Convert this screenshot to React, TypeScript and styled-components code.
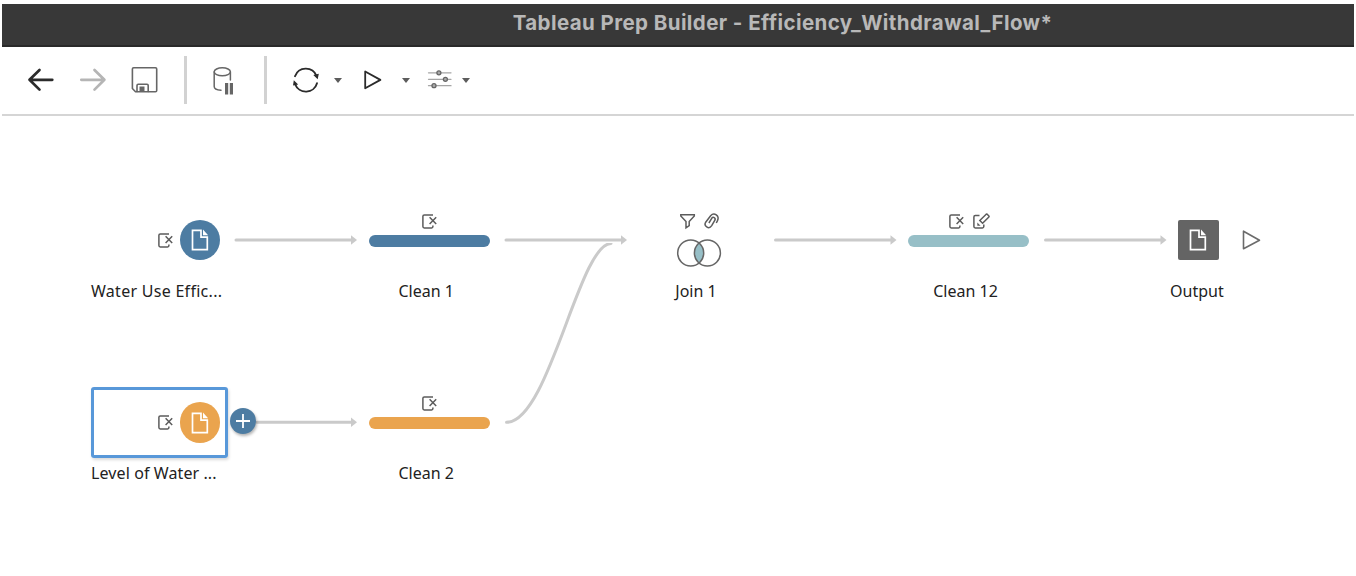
import { ReactNode } from "react";
import styled, { createGlobalStyle } from "styled-components";

const BLUE = "#4d7ca2";
const ORANGE = "#eaa44e";
const TEAL = "#97bfc7";

export default function App() {
  return (
    <>
      <GlobalStyle />
      <Window>
        <TitleBar>
          <Title>Tableau Prep Builder - Efficiency_Withdrawal_Flow*</Title>
        </TitleBar>

        <Toolbar>
          <ToolGroup $gap={24}>
            <BackIcon />
            <ForwardIcon />
            <SaveIcon />
          </ToolGroup>
          <Divider />
          <DataPauseIcon />
          <Divider />
          <RunTools $gap={17}>
            <ToolGroup $gap={14}>
              <RefreshIcon />
              <Caret />
            </ToolGroup>
            <ToolGroup $gap={14.5}>
              <RunIcon />
              <Caret />
            </ToolGroup>
            <ToolGroup $gap={7}>
              <SettingsIcon />
              <Caret />
            </ToolGroup>
          </RunTools>
        </Toolbar>

        <Canvas>
          <Edges />

          <Node $x={89} $y={88.5}>
            <InputBox>
              <RemoveIcon />
              <InputCircle $color={BLUE}>
                <DocIcon />
              </InputCircle>
            </InputBox>
            <InputLabel $top={5} $spacing={0.28}>
              Water Use Effic...
            </InputLabel>
          </Node>

          <Node $x={89} $y={271}>
            <InputBox $selected>
              <RemoveIcon />
              <InputCircle $color={ORANGE}>
                <DocIcon />
              </InputCircle>
            </InputBox>
            <InputLabel $top={5} $spacing={0.1}>
              Level of Water ...
            </InputLabel>
            <AddButton>
              <PlusIcon />
            </AddButton>
          </Node>

          <StepNode x={366.7} y={98} color={BLUE} label="Clean 1">
            <RemoveIcon />
          </StepNode>
          <StepNode x={366.7} y={280} color={ORANGE} label="Clean 2">
            <RemoveIcon />
          </StepNode>

          <Node $x={636.5} $y={97}>
            <Badges>
              <FilterIcon />
              <ClipIcon />
            </Badges>
            <JoinIcon />
            <StepLabel $top={13}>Join 1</StepLabel>
          </Node>

          <StepNode x={906} y={98} color={TEAL} label="Clean 12">
            <RemoveIcon />
            <EditIcon />
          </StepNode>

          <Node $x={1168} $y={103.5}>
            <OutputRow>
              <OutputSquare>
                <DocIcon />
              </OutputSquare>
              <OutputRunIcon />
            </OutputRow>
            <OutputLabel>Output</OutputLabel>
          </Node>
        </Canvas>
      </Window>
    </>
  );
}

type StepNodeProps = {
  x: number;
  y: number;
  color: string;
  label: string;
  children: ReactNode;
};

function StepNode({ x, y, color, label, children }: StepNodeProps) {
  return (
    <Node $x={x} $y={y}>
      <Badges>{children}</Badges>
      <Bar $color={color} />
      <StepLabel $top={34}>{label}</StepLabel>
    </Node>
  );
}

function Edges() {
  return (
    <EdgeLayer width="1352" height="460" viewBox="2 116 1352 460">
      <defs>
        <clipPath id="merge">
          <rect x="500" y="243" width="130" height="190" />
        </clipPath>
      </defs>
      <path d="M236 240H353M506 240H623M775.5 240H893M1045.5 240H1163M257 422.3H353" />
      <path d="M506.5 422.3C549 422.3 579 243.8 611 243.5" clipPath="url(#merge)" />
      {[
        [357, 240],
        [627, 240],
        [896.5, 240],
        [1166.5, 240],
        [357, 422.3],
      ].map(([x, y]) => (
        <polygon
          key={`${x}-${y}`}
          points={`${x},${y} ${x - 6},${y - 4.7} ${x - 6},${y + 4.7}`}
        />
      ))}
    </EdgeLayer>
  );
}

const BackIcon = () => (
  <ToolIcon viewBox="0 0 28 28" $color="#2b2b2b" $stroke={2.7}>
    <path d="M2.500 13.800H25.300M12.500 4L2.500 13.800L12.500 23.600" />
  </ToolIcon>
);

const ForwardIcon = () => (
  <ToolIcon viewBox="0 0 28 28" $color="#b5b5b5" $stroke={2.7}>
    <path d="M2.300 13.800H25.300M15.500 4L25.400 13.800L15.500 23.600" />
  </ToolIcon>
);

const SaveIcon = () => (
  <ToolIcon viewBox="0 0 28 28" $color="#666" $stroke={1.6}>
    <path d="M6 1.800H24.500Q25.700 1.800 25.700 3V24.500Q25.700 25.800 24.500 25.800H4.500L1.400 22.500V3Q1.400 1.800 2.600 1.800Z" />
    <path d="M6 25.500V19.500Q6 18.300 7.200 18.300H16Q17.200 18.300 17.200 19.500V25.500" />
    <path d="M8.500 20.500H13.500V25.500H8.500Z" fill="#666" stroke="none" />
  </ToolIcon>
);

const DataPauseIcon = () => (
  <ToolIcon viewBox="0 0 28 28" $color="#666" $stroke={1.5}>
    <ellipse cx="11.300" cy="5.800" rx="8.100" ry="4" />
    <path d="M3.200 6V20.500C3.200 22.500 6 24 10 24.300M19.400 6V14" />
    <path d="M14 17H17.200V28.500H14ZM18.800 17H22V28.500H18.800Z" fill="#666" stroke="none" />
  </ToolIcon>
);

const RefreshIcon = () => (
  <ToolIcon viewBox="0 0 28 28" $color="#2b2b2b" $stroke={1.9}>
    <path d="M3 10.200A11.500 11.500 0 0 1 24.500 9.800M25 17.200A11.500 11.500 0 0 1 3.200 18.300" />
    <path d="M21.300 9L26.800 7.800L25.700 13.300ZM1.800 14.200L6.200 18.500L1 19.500Z" fill="#2b2b2b" stroke="none" />
  </ToolIcon>
);

const RunIcon = () => (
  <ToolIcon viewBox="0 0 28 28" $color="#2b2b2b" $stroke={1.8}>
    <path d="M6.200 5.500V22.300L21.400 13.900Z" />
  </ToolIcon>
);

const SettingsIcon = () => (
  <ToolIcon viewBox="0 0 28 28" $color="#666" $stroke={1.3}>
    <path d="M1.500 6.800H24M1.500 13.300H24M1.500 19.700H24" stroke="#a5a5a5" />
    <circle cx="11.900" cy="6.800" r="2" fill="#aaa" />
    <circle cx="18.400" cy="13.300" r="2" fill="#aaa" />
    <circle cx="7" cy="19.700" r="2" fill="#aaa" />
  </ToolIcon>
);

const RemoveIcon = () => (
  <BadgeIcon viewBox="0 0 15 15">
    <path d="M11 .9H2.300Q.9 .9 .9 2.300V12.600Q.9 14 2.300 14H9.600Q10.900 14 10.900 12.600V11.600" />
    <path d="M7.600 3.200L14.200 10M14.200 3.200L7.600 10" />
  </BadgeIcon>
);

const EditIcon = () => (
  <BadgeIcon viewBox="0 0 15 15">
    <path d="M6.500 1.500H2.300Q.9 1.500 .9 2.900V12.600Q.9 14 2.300 14H9.400Q10.800 14 10.800 12.600V10.500" />
    <path d="M13.200 .2Q13.700 -.2 14.200 .2L15.900 1.900Q16.400 2.500 15.900 3L9.600 9.300L6.800 6.500Z" />
    <path d="M4.300 8.600L7.600 11.700H4.300Z" fill="#5c5c5c" stroke="none" />
  </BadgeIcon>
);

const FilterIcon = () => (
  <BadgeIcon viewBox="0 0 15 15">
    <path d="M.8 1.800H14.300V3L9.200 8.500V12.700L6 14.800V8.500L.8 3Z" />
  </BadgeIcon>
);

const ClipIcon = () => (
  <BadgeIcon viewBox="0 0 15 15">
    <path d="M12.300 10L13.500 7.600C15.800 2.800 10.200 -1.200 6.600 2.700L1.700 9.200C-.6 13 4.800 17 7.700 12.700L10.900 7.200C12 4.800 9.100 3.300 7.700 5.300L4.900 10" />
  </BadgeIcon>
);

const DocIcon = () => (
  <svg width="18" height="22" viewBox="0 0 18 22" fill="none" stroke="#fff" strokeWidth="1.700">
    <path d="M10 1.300H1.500V20.700H16.300V8.200H10Z" />
    <path d="M12 .6L17.100 6.300H12Z" fill="#fff" stroke="none" />
  </svg>
);

const PlusIcon = () => (
  <svg width="14" height="14" viewBox="0 0 14 14" stroke="#fff" strokeWidth="1.800">
    <path d="M7 0V14M0 7H14" />
  </svg>
);

const JoinIcon = () => (
  <JoinSvg width="46" height="30" viewBox="0 0 46 30" fill="none" stroke="#666" strokeWidth="1.500">
    <path d="M23 5A13 13 0 0 1 23 25A13 13 0 0 1 23 5Z" fill={TEAL} stroke="none" />
    <circle cx="14.700" cy="15" r="13" />
    <circle cx="31.400" cy="15" r="13" />
  </JoinSvg>
);

const OutputRunIcon = () => (
  <svg width="20" height="22" viewBox="0 0 20 22" fill="none" stroke="#6b6b6b" strokeWidth="1.600" strokeLinejoin="round">
    <path d="M1.500 2.200V19.800L17.500 11.300Z" />
  </svg>
);

const GlobalStyle = createGlobalStyle`
  body {
    margin: 0;
    background-color: #fff;
    overflow: hidden;
  }
`;

const Window = styled.div`
  display: flex;
  flex-direction: column;
  box-sizing: border-box;
  height: 576px;
  padding: 4px 2px 0;
  font-family: "Noto Sans", "Open Sans", sans-serif;
  font-variant-ligatures: none;
`;

const TitleBar = styled.header`
  display: flex;
  justify-content: center;
  box-sizing: border-box;
  height: 43px;
  padding-left: 209px;
  background-color: #383838;
  border-bottom: 2px solid #292929;
`;

const Title = styled.h1`
  margin: 0;
  color: #b8b8b8;
  font-family: Inter, "Liberation Sans", sans-serif;
  font-size: 20.5px;
  font-weight: 700;
  line-height: 38px;
  letter-spacing: 0.42px;
  white-space: nowrap;
`;

const Toolbar = styled.div`
  display: flex;
  align-items: center;
  gap: 24.5px;
  box-sizing: border-box;
  height: 69px;
  padding: 0 0 1px 25px;
  border-bottom: 2px solid #d5d5d5;
`;

const ToolGroup = styled.div<{ $gap: number }>`
  display: flex;
  align-items: center;
  gap: ${({ $gap }) => $gap}px;
`;

const RunTools = styled(ToolGroup)`
  padding-left: 1px;
`;

const ToolIcon = styled.svg<{ $color: string; $stroke: number }>`
  width: 28px;
  height: 28px;
  fill: none;
  stroke: ${({ $color }) => $color};
  stroke-width: ${({ $stroke }) => $stroke};
  stroke-linecap: round;
  stroke-linejoin: round;
  overflow: visible;
`;

const Divider = styled.div`
  width: 3px;
  height: 48px;
  background-color: #d2d2d2;
`;

const Caret = styled.div`
  border: 4px solid transparent;
  border-top: 5px solid #5c5c5c;
  border-bottom: 0;
`;

const Canvas = styled.main`
  position: relative;
  flex: 1;
`;

const EdgeLayer = styled.svg`
  display: block;
  fill: none;
  stroke: #cacaca;
  stroke-width: 3;
  stroke-linecap: round;

  polygon {
    fill: #cacaca;
    stroke: none;
  }
`;

const Node = styled.div<{ $x: number; $y: number }>`
  position: absolute;
  left: ${({ $x }) => $x}px;
  top: ${({ $y }) => $y}px;
`;

const InputBox = styled.div<{ $selected?: boolean }>`
  display: flex;
  align-items: center;
  justify-content: flex-end;
  gap: 6.5px;
  box-sizing: border-box;
  width: 137px;
  height: 71px;
  padding-right: 5px;
  border: 3px solid ${({ $selected }) => ($selected ? "#5898d9" : "transparent")};
  border-radius: 3px;
  box-shadow: ${({ $selected }) => ($selected ? "1px 2px 3px rgba(0, 0, 0, 0.15)" : "none")};
`;

const InputCircle = styled.div<{ $color: string }>`
  display: flex;
  align-items: center;
  justify-content: center;
  width: 40.5px;
  height: 40.5px;
  border-radius: 50%;
  background-color: ${({ $color }) => $color};
`;

const Label = styled.div`
  color: #222;
  font-size: 16px;
  line-height: 20px;
  white-space: nowrap;
`;

const InputLabel = styled(Label)<{ $top: number; $spacing: number }>`
  margin-top: ${({ $top }) => $top}px;
  letter-spacing: ${({ $spacing }) => $spacing}px;
`;

const StepLabel = styled(Label)<{ $top: number }>`
  width: 115px;
  margin-top: ${({ $top }) => $top}px;
  text-align: center;
`;

const AddButton = styled.div`
  position: absolute;
  left: 139px;
  top: 21px;
  display: flex;
  align-items: center;
  justify-content: center;
  width: 26px;
  height: 26px;
  border-radius: 50%;
  background-color: ${BLUE};
  box-shadow: 1px 2px 3px rgba(0, 0, 0, 0.3);
`;

const Badges = styled.div`
  display: flex;
  justify-content: center;
  gap: 9px;
  width: 121px;
  padding-bottom: 6px;
`;

const BadgeIcon = styled.svg`
  display: block;
  width: 15px;
  height: 15px;
  fill: none;
  stroke: #5c5c5c;
  stroke-width: 1.5;
  overflow: visible;
`;

const Bar = styled.div<{ $color: string }>`
  width: 121px;
  height: 12px;
  border-radius: 6px;
  background-color: ${({ $color }) => $color};
`;

const JoinSvg = styled.svg`
  display: block;
  margin: 4px auto 0;
`;

const OutputRow = styled.div`
  display: flex;
  align-items: center;
  gap: 23px;
  padding-left: 8px;
`;

const OutputSquare = styled.div`
  display: flex;
  align-items: center;
  justify-content: center;
  width: 40.5px;
  height: 40.5px;
  border-radius: 2px;
  background-color: #646464;
`;

const OutputLabel = styled(Label)`
  margin-top: 21px;
`;
